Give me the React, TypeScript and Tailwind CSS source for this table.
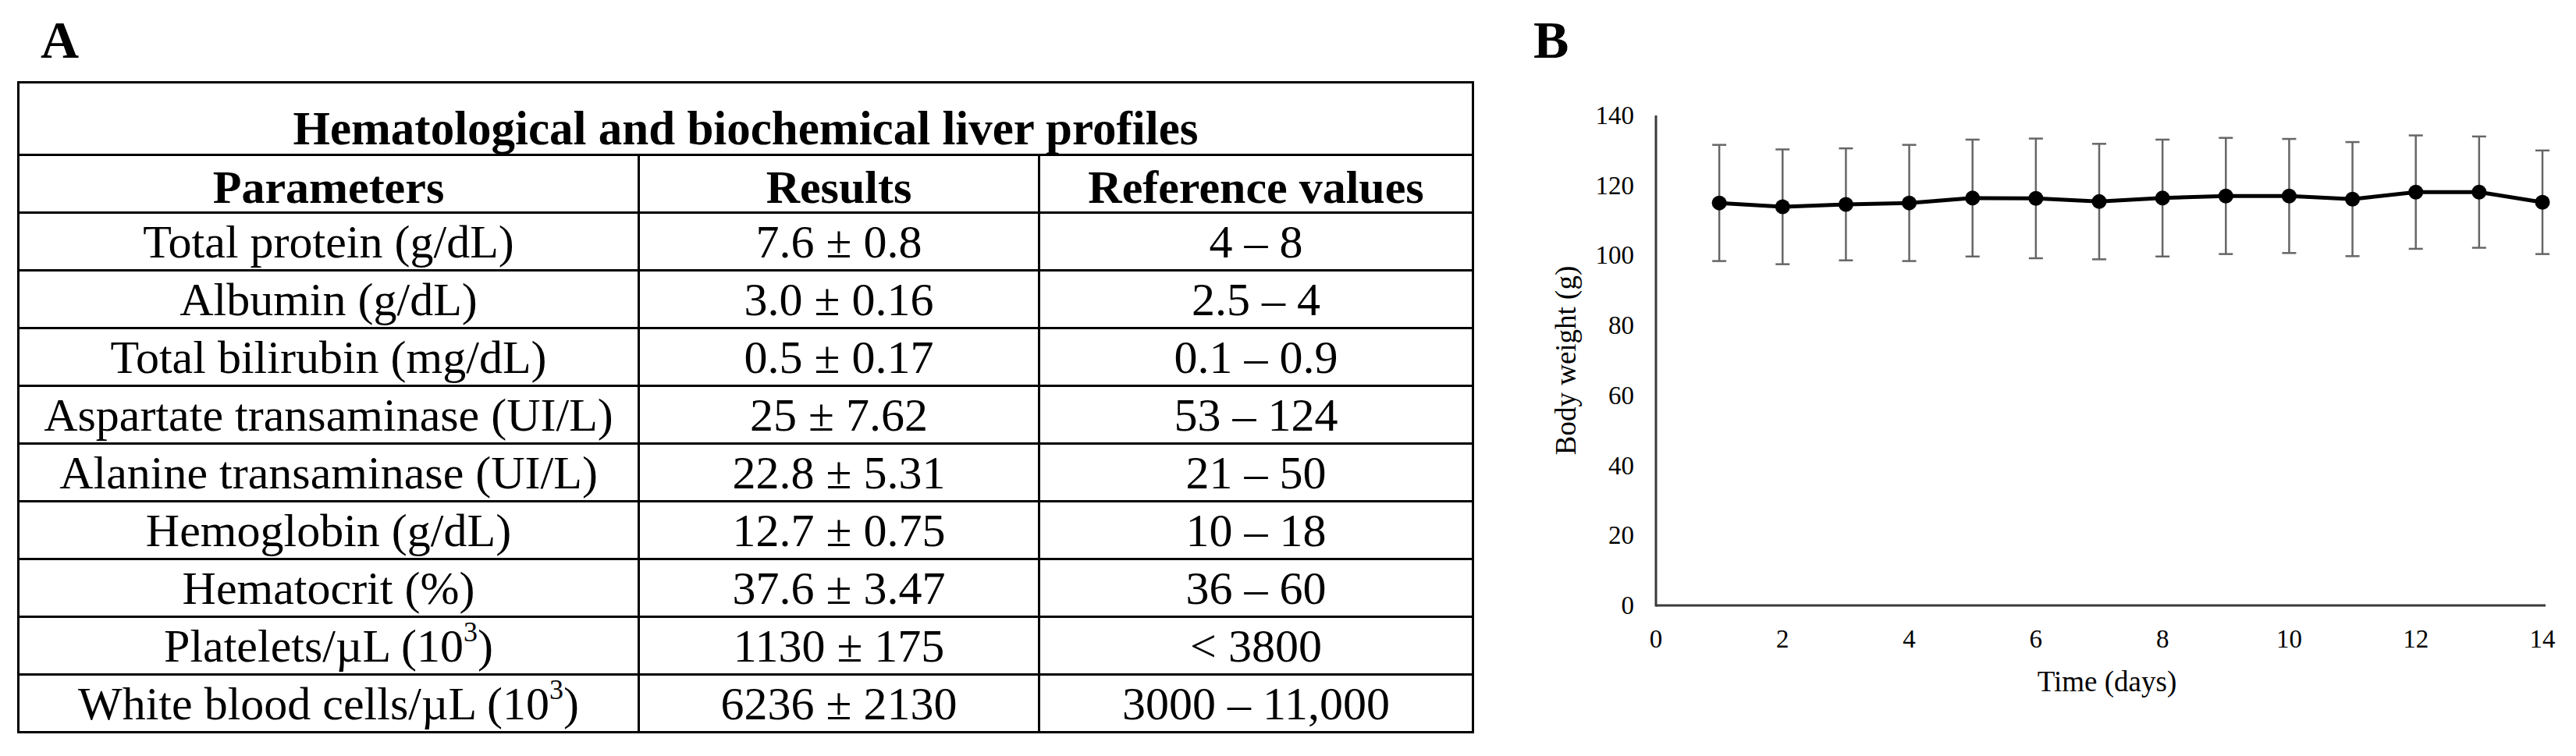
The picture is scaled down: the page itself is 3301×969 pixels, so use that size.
import React from 'react';

const serif = { fontFamily: '"Liberation Serif", "Times New Roman", serif' };

const rows: [React.ReactNode, string, string][] = [
  ['Total protein (g/dL)', '7.6 ± 0.8', '4 – 8'],
  ['Albumin (g/dL)', '3.0 ± 0.16', '2.5 – 4'],
  ['Total bilirubin (mg/dL)', '0.5 ± 0.17', '0.1 – 0.9'],
  ['Aspartate transaminase (UI/L)', '25 ± 7.62', '53 – 124'],
  ['Alanine transaminase (UI/L)', '22.8 ± 5.31', '21 – 50'],
  ['Hemoglobin (g/dL)', '12.7 ± 0.75', '10 – 18'],
  ['Hematocrit (%)', '37.6 ± 3.47', '36 – 60'],
  [<>Platelets/µL (10<sup className="text-[0.6em]">3</sup>)</>, '1130 ± 175', '< 3800'],
  [<>White blood cells/µL (10<sup className="text-[0.6em]">3</sup>)</>, '6236 ± 2130', '3000 – 11,000'],
];

// day, mean weight (g), sd
const weights: [number, number, number][] = [
  [1, 115.0, 16.6],
  [2, 113.9, 16.4],
  [3, 114.6, 16.0],
  [4, 115.0, 16.6],
  [5, 116.4, 16.7],
  [6, 116.3, 17.1],
  [7, 115.4, 16.5],
  [8, 116.4, 16.7],
  [9, 117.0, 16.6],
  [10, 117.0, 16.3],
  [11, 116.1, 16.3],
  [12, 118.1, 16.2],
  [13, 118.1, 15.9],
  [14, 115.2, 14.8],
];

const X0 = 2122;
const Y0 = 776;
const xs = (d: number) => X0 + (d * 1136) / 14;
const ys = (v: number) => Y0 - (v * 628) / 140;

function Row({ cells, head }: { cells: React.ReactNode[]; head?: boolean }) {
  const cell = `flex items-center justify-center ${head ? 'pt-[8px] font-bold' : ''}`;
  return (
    <div className="flex h-[74px] border-t-[3px] border-black text-[60px] leading-none">
      <div className={`w-[792px] ${cell}`}>{cells[0]}</div>
      <div className={`w-[513px] border-l-[3px] border-black ${cell}`}>{cells[1]}</div>
      <div className={`flex-1 border-l-[3px] border-black ${cell}`}>{cells[2]}</div>
    </div>
  );
}

function WeightChart() {
  const line = weights.map(([d, m]) => `${xs(d)},${ys(m)}`).join(' ');
  return (
    <svg width={1401} height={865} viewBox="1900 104 1401 865" style={serif}>
      {[0, 20, 40, 60, 80, 100, 120, 140].map((v) => (
        <text key={v} x={2094} y={ys(v) + 11} fontSize={33} textAnchor="end" fill="#000">
          {v}
        </text>
      ))}
      {[0, 2, 4, 6, 8, 10, 12, 14].map((d) => (
        <text key={d} x={xs(d)} y={830} fontSize={33} textAnchor="middle" fill="#000">
          {d}
        </text>
      ))}
      <line x1={X0} y1={148} x2={X0} y2={Y0 + 1.5} stroke="#3a3a3a" strokeWidth={3} />
      <line x1={X0} y1={Y0} x2={3262} y2={Y0} stroke="#3a3a3a" strokeWidth={3} />

      {weights.map(([d, m, sd]) => {
        const x = xs(d);
        const top = ys(m + sd);
        const bot = ys(m - sd);
        return (
          <g key={d} stroke="#666" strokeWidth={2.5}>
            <line x1={x} y1={top} x2={x} y2={bot} />
            <line x1={x - 9} y1={top} x2={x + 9} y2={top} />
            <line x1={x - 9} y1={bot} x2={x + 9} y2={bot} />
          </g>
        );
      })}
      <polyline points={line} fill="none" stroke="#000" strokeWidth={5} strokeLinejoin="round" />
      {weights.map(([d, m]) => (
        <circle key={d} cx={xs(d)} cy={ys(m)} r={9.5} fill="#000" />
      ))}

      <text x={2700} y={886} fontSize={37} textAnchor="middle" fill="#000">
        Time (days)
      </text>
      <text transform="translate(2019,462) rotate(-90)" fontSize={37} textAnchor="middle" fill="#000">
        Body weight (g)
      </text>
    </svg>
  );
}

export default function App() {
  return (
    <div className="flex w-[3301px] h-[969px] bg-white text-black" style={serif}>
      <div className="w-[1900px] shrink-0">
        <div className="h-[104px] pl-[52px] pt-[17px] text-[68px] font-bold leading-none">A</div>
        <div className="ml-[22px] w-[1867px] border-[3px] border-black">
          <div className="h-[90px] flex items-end justify-center pb-[2px] text-[61px] font-bold leading-none">
            Hematological and biochemical liver profiles
          </div>
          <Row head cells={['Parameters', 'Results', 'Reference values']} />
          {rows.map((r, i) => (
            <Row key={i} cells={r} />
          ))}
        </div>
      </div>

      <div className="flex-1">
        <div className="h-[104px] pl-[65px] pt-[17px] text-[68px] font-bold leading-none">B</div>
        <WeightChart />
      </div>
    </div>
  );
}
